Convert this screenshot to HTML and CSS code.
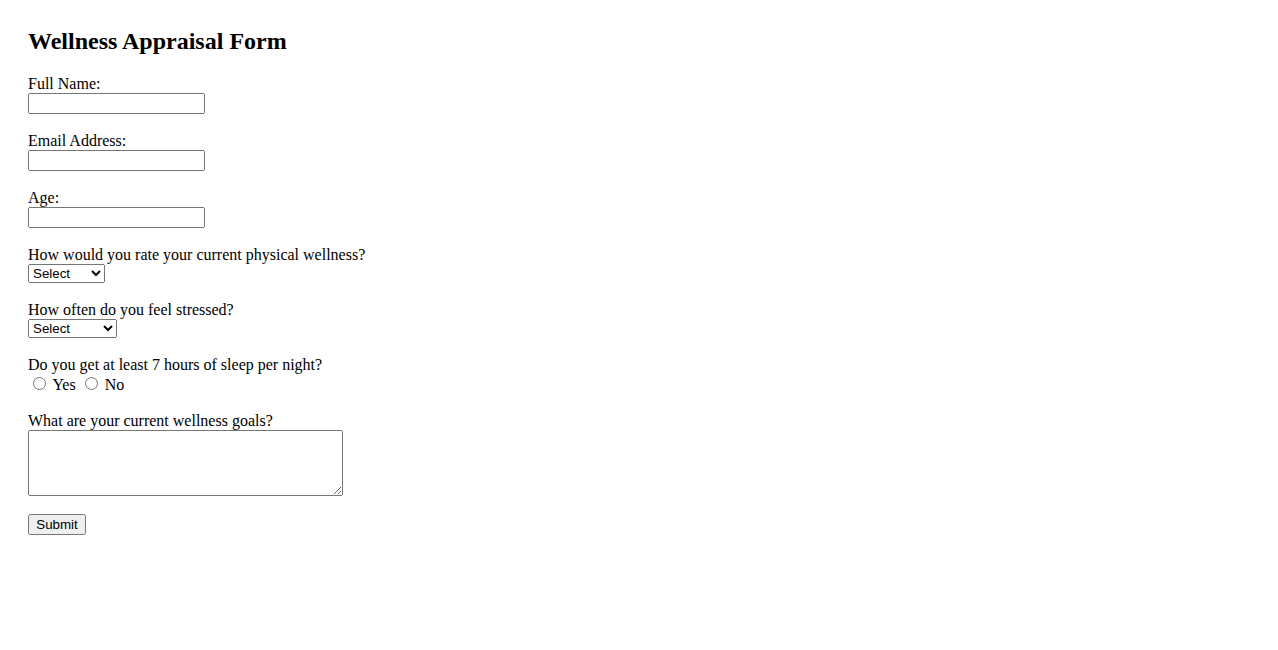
FILE: index.html
```html
<!DOCTYPE html>
<html lang="en">
<head>
<meta charset="utf-8">
<title>Wellness Appraisal Form</title>
<link rel="stylesheet" href="styles.css">
</head>
<body>
<div class="container">
  <h2 class="title">Wellness Appraisal Form</h2>
  <form class="form">
    <div class="form-group">
      <label class="label" for="name">Full Name:</label>
      <input class="field" type="text" id="name" name="name">
    </div>
    <div class="form-group">
      <label class="label" for="email">Email Address:</label>
      <input class="field" type="email" id="email" name="email">
    </div>
    <div class="form-group">
      <label class="label" for="age">Age:</label>
      <input class="field" type="number" id="age" name="age">
    </div>
    <div class="form-group">
      <label class="label" for="physical">How would you rate your current physical wellness?</label>
      <select class="select" id="physical" name="physical">
        <option value="">Select</option>
        <option>Excellent</option>
        <option>Good</option>
        <option>Fair</option>
        <option>Poor</option>
      </select>
    </div>
    <div class="form-group">
      <label class="label" for="stress">How often do you feel stressed?</label>
      <select class="select" id="stress" name="stress">
        <option value="">Select</option>
        <option>Never</option>
        <option>Rarely</option>
        <option>Sometimes</option>
        <option>Often</option>
        <option>Always</option>
      </select>
    </div>
    <div class="form-group">
      <label class="label">Do you get at least 7 hours of sleep per night?</label>
      <input class="radio" type="radio" id="sleep-yes" name="sleep" value="yes"> <label for="sleep-yes">Yes</label>
      <input class="radio" type="radio" id="sleep-no" name="sleep" value="no"> <label for="sleep-no">No</label>
    </div>
    <div class="form-group">
      <label class="label" for="goals">What are your current wellness goals?</label>
      <textarea class="textarea" id="goals" name="goals" rows="4" cols="40"></textarea>
    </div>
    <button class="submit" type="submit">Submit</button>
  </form>
</div>
</body>
</html>
```

FILE: styles.css
```css
body {
  margin: 8px;
  font-family: "Liberation Serif", "Times New Roman", serif;
  font-size: 16px;
  color: #000;
  background: #fff;
}

.container {
  padding: 20px;
}

.title {
  margin: 0 0 0.83em;
  font-size: 1.5em;
  font-weight: bold;
}

.form-group {
  margin-bottom: 18px;
}

.label {
  display: block;
}

.field,
.select,
.textarea,
.submit {
  font-family: "Liberation Sans", Arial, sans-serif;
  font-size: 13.333px;
}

.field {
  box-sizing: border-box;
  width: 177px;
  height: 21px;
}

.select {
  height: 19px;
}

.textarea {
  box-sizing: border-box;
  width: 315px;
  height: 66px;
  vertical-align: bottom;
  font-family: "Liberation Mono", "Courier New", monospace;
}

.submit {
  height: 21px;
  width: 58px;
}
```
